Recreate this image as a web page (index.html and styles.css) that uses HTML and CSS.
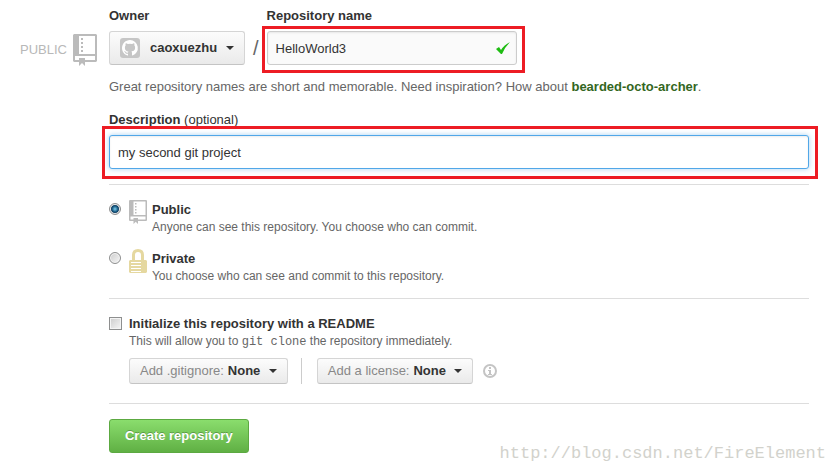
FILE: index.html
```html
<!DOCTYPE html>
<html lang="en">
<head>
    <meta charset="UTF-8">
    <meta name="viewport" content="width=device-width, initial-scale=1.0">
    <title>Create a New Repository</title>
    <link rel="stylesheet" href="styles.css">
</head>
<body>
    <svg class="sprite" aria-hidden="true">
        <symbol id="icon-repo" viewBox="0 0 24 32">
            <path fill-rule="evenodd" d="M1 0h22l1 1v26l-1 1H12v4l-3-3-3 3v-4H1l-1-1V1zM6 2v18h16V2zM2 22v4h4v-2h6v2h10v-4z"/>
            <path d="M8 4h2v2H8zM8 8h2v2H8zM8 12h2v2H8zM8 16h2v2H8z"/>
        </symbol>
    </svg>

    <main class="page">
        <div class="visibility">
            <span>PUBLIC</span>
            <svg class="repo-icon"><use href="#icon-repo"/></svg>
        </div>

        <form class="new-repo">
            <div class="name-row">
                <div class="field">
                    <label for="owner">Owner</label>
                    <div class="picker picker-owner">
                        <svg class="avatar" viewBox="0 0 20 20">
                            <rect width="20" height="20" rx="3" fill="#c6c6c6"/>
                            <path transform="translate(2 2)" fill="#fff" d="M8 0C3.6 0 0 3.6 0 8c0 3.500 2.300 6.500 5.500 7.600.4.100.5-.2.500-.4v-1.500c-2.200.5-2.700-1-2.700-1-.4-.9-.9-1.200-.9-1.200-.7-.5.100-.5.100-.5.800.100 1.200.8 1.200.8.700 1.300 1.900.9 2.300.7.100-.5.300-.9.500-1.100-1.800-.2-3.600-.9-3.600-4 0-.9.300-1.600.8-2.100-.1-.2-.4-1 .1-2.100 0 0 .7-.2 2.200.8a7.500 7.500 0 0 1 4 0c1.500-1 2.200-.8 2.200-.8.400 1.100.2 1.900.1 2.100.5.600.8 1.300.8 2.200 0 3.100-1.900 3.700-3.700 3.900.3.300.6.800.6 1.500v2.200c0 .2.100.5.600.4A8 8 0 0 0 8 0z"/>
                            <path fill="#c6c6c6" d="M6 6l2 1h4l2-1v5l-2 2H8l-2-2z"/>
                        </svg>
                        <select id="owner">
                            <option>caoxuezhu</option>
                        </select>
                    </div>
                </div>
                <span class="slash">/</span>
                <div class="field">
                    <label for="repo-name">Repository name</label>
                    <div class="input-wrap">
                        <input class="text-input" id="repo-name" type="text" value="HelloWorld3">
                        <svg class="check" viewBox="0 0 14 12"><path d="M0 7l3-2 2 3q3-5 9-8-5 5-8 12H5z"/></svg>
                        <span class="mark mark-name"></span>
                    </div>
                </div>
            </div>

            <p class="hint">Great repository names are short and memorable. Need inspiration? How about <a href="#">bearded-octo-archer</a>.</p>

            <div class="field">
                <label for="description">Description <span class="optional">(optional)</span></label>
                <div class="input-wrap">
                    <input class="text-input text-input-focus" id="description" type="text" value="my second git project">
                    <span class="mark mark-description"></span>
                </div>
            </div>

            <div class="section choices">
                <label class="choice">
                    <input class="radio" type="radio" name="visibility" checked>
                    <svg class="choice-icon"><use href="#icon-repo"/></svg>
                    <span class="choice-text">
                        <strong>Public</strong>
                        <small>Anyone can see this repository. You choose who can commit.</small>
                    </span>
                </label>
                <label class="choice">
                    <input class="radio" type="radio" name="visibility">
                    <svg class="choice-icon lock" viewBox="0 0 18 24">
                        <path fill-rule="evenodd" d="M3 11V6q0-6 6-6t6 6v5h2l1 1v11l-1 1H1l-1-1V12l1-1zM6 11h6V6q0-3-3-3T6 6zM2 13v1h10v-1zM2 16v1h10v-1zM2 19v1h10v-1zM2 22v1h10v-1z"/>
                    </svg>
                    <span class="choice-text">
                        <strong>Private</strong>
                        <small>You choose who can see and commit to this repository.</small>
                    </span>
                </label>
            </div>

            <div class="section">
                <label class="choice">
                    <input class="checkbox" type="checkbox">
                    <span class="choice-text">
                        <strong>Initialize this repository with a README</strong>
                        <small>This will allow you to <code>git clone</code> the repository immediately.</small>
                    </span>
                </label>
                <div class="templates">
                    <div class="picker">
                        <label for="gitignore">Add .gitignore:</label>
                        <select id="gitignore">
                            <option>None</option>
                        </select>
                    </div>
                    <span class="divider"></span>
                    <div class="picker">
                        <label for="license">Add a license:</label>
                        <select id="license">
                            <option>None</option>
                        </select>
                    </div>
                    <svg class="info" viewBox="0 0 14 14">
                        <circle cx="7" cy="7" r="6" fill="none" stroke="#c4c4c4" stroke-width="2"/>
                        <path fill="#c4c4c4" d="M6 3h2v2H6zM5 6h3v4h1v1H5v-1h1V7H5z"/>
                    </svg>
                </div>
            </div>

            <div class="section section-submit">
                <button class="btn-primary" type="submit">Create repository</button>
            </div>
        </form>

        <div class="watermark">http://blog.csdn.net/FireElement</div>
    </main>
</body>
</html>
```

FILE: styles.css
```css
* {
    box-sizing: border-box;
}

body {
    margin: 0;
    background-color: #fff;
    font-family: "Liberation Sans", Arial, sans-serif;
    font-size: 13px;
    line-height: 20px;
    color: #333;
}

.sprite {
    position: absolute;
    width: 0;
    height: 0;
}

.page {
    position: relative;
    display: flex;
    align-items: flex-start;
    gap: 12px;
    min-height: 100vh;
    padding: 6px 28px 20px 20px;
}

.visibility {
    display: flex;
    align-items: center;
    gap: 6px;
    padding-top: 28px;
    color: #b8b8b8;
}

.repo-icon {
    width: 24px;
    height: 32px;
    fill: #bbb;
}

.new-repo {
    flex: 1;
}

.name-row {
    display: flex;
    align-items: flex-end;
    gap: 8px;
}

.field > label {
    display: block;
    margin-bottom: 5px;
    font-weight: bold;
}

.optional {
    font-weight: normal;
}

.slash {
    font-size: 20px;
    line-height: 34px;
    color: #666;
}

/* Drop-downs */
.picker {
    display: flex;
    align-items: center;
    height: 26px;
    padding: 0 10px;
    border: 1px solid #d5d5d5;
    border-bottom-color: #c4c4c4;
    border-radius: 3px;
    background: linear-gradient(#fcfcfc, #eaeaea);
    color: #888;
}

.picker select {
    appearance: none;
    margin: 0;
    padding: 0 0 0 4px;
    border: 0;
    background: none;
    font: inherit;
    font-weight: bold;
    color: #333;
    cursor: pointer;
}

.picker::after {
    content: "";
    margin-left: 8px;
    border: 4px solid transparent;
    border-top-color: #333;
    border-bottom: 0;
    pointer-events: none;
}

.picker-owner {
    height: 34px;
}

.avatar {
    width: 20px;
    height: 20px;
    margin-right: 6px;
}

/* Text fields */
.input-wrap {
    position: relative;
}

.text-input {
    display: block;
    width: 250px;
    height: 34px;
    padding: 0 8px;
    border: 1px solid #ccc;
    border-radius: 3px;
    outline: none;
    background-color: #fafafa;
    box-shadow: inset 0 1px 2px rgba(0, 0, 0, 0.075);
    font: inherit;
    color: #333;
}

.text-input-focus {
    width: 100%;
    border-color: #51a7e8;
    background-color: #fff;
    box-shadow: inset 0 1px 2px rgba(0, 0, 0, 0.075), 0 0 5px rgba(81, 167, 232, 0.5);
}

.check {
    position: absolute;
    top: 11px;
    right: 7px;
    width: 14px;
    height: 12px;
    fill: #1ebc12;
}

.mark {
    position: absolute;
    border: 3px solid #ed1c24;
    pointer-events: none;
}

.mark-name {
    inset: -5px -8px -8px -5px;
}

.mark-description {
    inset: -9px -9px -10px -7px;
}

.hint {
    margin: 12px 0 13px;
    color: #666;
}

.hint a {
    font-weight: bold;
    color: #336622;
    text-decoration: none;
}

/* Sections */
.section {
    margin-top: 15px;
    padding-top: 15px;
    border-top: 1px solid #ddd;
}

.section-submit {
    margin-top: 19px;
}

.choices {
    display: flex;
    flex-direction: column;
    gap: 15px;
}

.choice {
    display: flex;
    align-items: flex-start;
}

.choice-icon {
    width: 18px;
    height: 24px;
    margin: 0 5px 0 8px;
    fill: #bbb;
}

.lock {
    fill: #e5d8a0;
}

.choice-text strong,
.choice-text small {
    display: block;
}

.choice-text small {
    font-size: 12px;
    line-height: 14px;
    color: #666;
}

.choice-text code {
    font-family: "Liberation Mono", monospace;
    font-size: 12px;
    line-height: 12px;
}

.radio,
.checkbox {
    appearance: none;
    margin: 3px 0 0;
    border: 1px solid #8e8f8f;
    background: linear-gradient(135deg, #ccc, #f6f6f6);
    box-shadow: inset 0 0 0 1px #f4f4f4;
}

.radio {
    width: 12px;
    height: 12px;
    border-radius: 50%;
}

.radio:checked {
    background: radial-gradient(circle at 5px 5px, #7fd0f0, #12537c 3px, #0b3050 4px, #e4e4e4 5px);
}

.checkbox {
    width: 13px;
    height: 13px;
    margin-right: 7px;
}

.templates {
    display: flex;
    align-items: center;
    margin: 10px 0 0 20px;
}

.divider {
    width: 1px;
    height: 26px;
    margin: 0 15px 0 13px;
    background-color: #ccc;
}

.info {
    width: 14px;
    height: 14px;
    margin-left: 10px;
}

.btn-primary {
    height: 34px;
    padding: 0 15px;
    border: 1px solid #5ca941;
    border-radius: 3px;
    background: linear-gradient(#8add6d, #60b044);
    font: inherit;
    font-weight: bold;
    color: #fff;
    text-shadow: 0 -1px 0 rgba(0, 0, 0, 0.25);
    cursor: pointer;
}

.watermark {
    position: absolute;
    right: 11px;
    bottom: 9px;
    font-family: "Liberation Mono", monospace;
    font-size: 17px;
    color: #d2d2cc;
}
```
